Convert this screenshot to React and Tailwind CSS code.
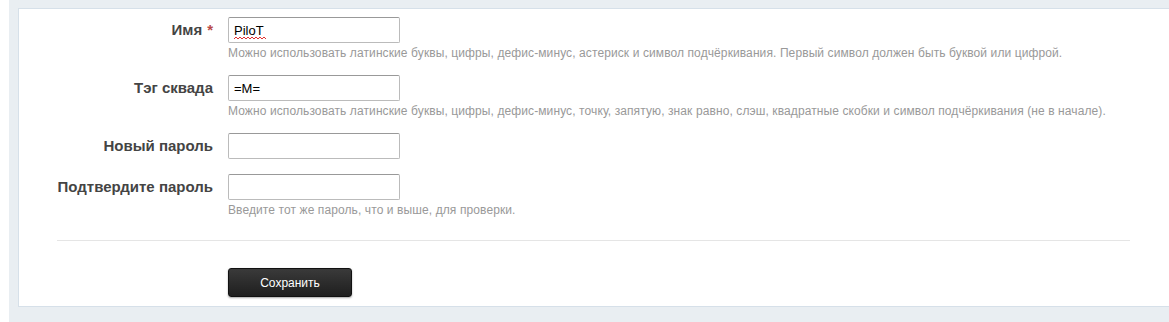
import React from 'react';

const fields = [
  {
    label: 'Имя',
    required: true,
    value: 'PiloT',
    squiggle: true,
    hint: 'Можно использовать латинские буквы, цифры, дефис-минус, астериск и символ подчёркивания. Первый символ должен быть буквой или цифрой.',
  },
  {
    label: 'Тэг сквада',
    value: '=M=',
    hint: 'Можно использовать латинские буквы, цифры, дефис-минус, точку, запятую, знак равно, слэш, квадратные скобки и символ подчёркивания (не в начале).',
  },
  { label: 'Новый пароль', type: 'password', value: '' },
  {
    label: 'Подтвердите пароль',
    type: 'password',
    value: '',
    hint: 'Введите тот же пароль, что и выше, для проверки.',
  },
];

const Field = ({ field }) => (
  <div className="grid grid-cols-[194px_1fr] gap-x-[15px]">
    <label className="h-[26px] flex items-center justify-end text-[15px] font-bold text-[#444]">
      {field.label}
      {field.required && <span className="ml-[5px] text-[#b94a48]">*</span>}
    </label>
    <div className="flex flex-col">
      {field.squiggle ? (
        <div className="relative w-[172px] h-[26px]">
          <input
            type="text"
            defaultValue={field.value}
            className="w-full h-full px-[5px] text-[13px] text-black border border-[#bbb] border-t-[#999] rounded-[2px] bg-white outline-none"
          />
          {/* spellcheck squiggle under the value */}
          <svg className="absolute left-[6px] top-[19px] pointer-events-none" width="32" height="4" viewBox="0 0 32 4">
            <path d="M0 3 L2 1 L4 3 L6 1 L8 3 L10 1 L12 3 L14 1 L16 3 L18 1 L20 3 L22 1 L24 3 L26 1 L28 3 L30 1 L32 3" fill="none" stroke="#e03030" strokeWidth="1" />
          </svg>
        </div>
      ) : (
        <input
          type={field.type || 'text'}
          defaultValue={field.value}
          className="w-[172px] h-[26px] px-[5px] text-[13px] text-black border border-[#bbb] border-t-[#999] rounded-[2px] bg-white outline-none"
        />
      )}
      {field.hint && <p className="mt-[3px] text-[12px] tracking-[0.1px] leading-[14px] text-[#999]">{field.hint}</p>}
    </div>
  </div>
);

const App = () => {
  return (
    <div className="w-[1169px] h-[322px] bg-white pl-[9px] overflow-hidden" style={{ fontFamily: '"Liberation Sans", Arial, sans-serif' }}>
      <div className="h-full bg-[#e9eef2] pt-[8px] pl-[9px] pb-[15px]">
        <div className="bg-white border-t border-l border-b border-[#d6e0e9] pt-[8px] pb-[9px]">
          <div className="flex flex-col gap-[15px]">
            {fields.map((f) => (
              <Field key={f.label} field={f} />
            ))}
          </div>
          <div className="ml-[38px] mr-[39px] mt-[23px] border-t border-[#e5e5e5]" />
          <div className="pl-[209px] mt-[27px]">
            <button className="w-[124px] h-[29px] rounded-[3px] text-[12px] text-white bg-gradient-to-b from-[#3a3a3a] to-[#1f1f1f] border border-[#111] shadow-[0_1px_2px_rgba(0,0,0,0.35)]">
              Сохранить
            </button>
          </div>
        </div>
      </div>
    </div>
  );
};

export default App;
